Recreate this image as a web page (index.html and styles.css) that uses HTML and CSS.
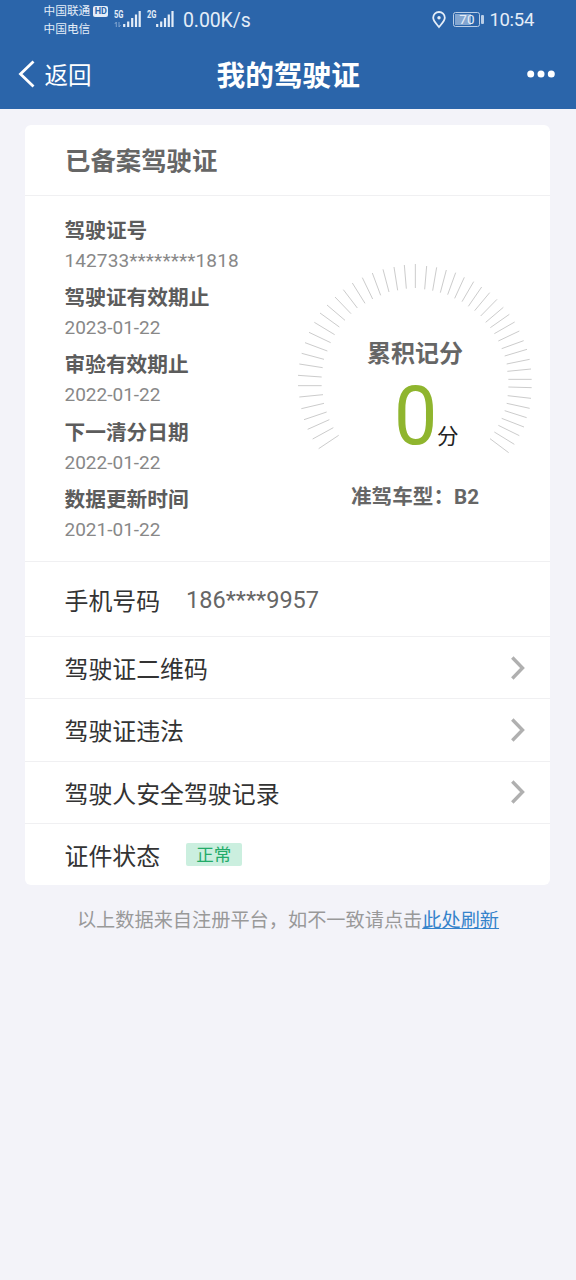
FILE: index.html
```html
<!DOCTYPE html>
<html lang="zh-CN">
<head>
<meta charset="utf-8">
<title>我的驾驶证</title>
<link rel="stylesheet" href="styles.css">
</head>
<body>
<header class="header">
  <div class="status">
    <div class="carriers">
      <div class="carrier">中国联通<span class="hd">HD</span></div>
      <div class="carrier">中国电信</div>
    </div>
    <svg class="signals" width="62" height="24" viewBox="0 0 62 24">
      <g class="net"><text x="0" y="11" textLength="9.5" lengthAdjust="spacingAndGlyphs">5G</text><text x="33" y="11" textLength="9.5" lengthAdjust="spacingAndGlyphs">2G</text></g>
      <path class="arrows" d="M2.3 20v-5l-1.5 2M5 15v5l1.5-2"/>
      <path class="bars" d="M10.2 20v-3M14.2 20v-5.500M18.200 20v-9M22 20V7.500M25.700 20V4M43.200 20v-3M47.200 20v-5.500M51 20v-9M54.800 20V7.500M58.500 20V4"/>
    </svg>
    <span class="speed">0.00K/s</span>
    <div class="status-right">
      <svg width="14" height="18" viewBox="0 0 14 18"><path class="pin" d="M7 16C4.200 12.600 1.200 10 1.200 6.800a5.800 5.800 0 0 1 11.600 0C12.800 10 9.800 12.600 7 16z"/><circle cx="7" cy="6.800" r="1.700" fill="#e4edf8"/></svg>
      <span class="battery"><span class="level">70</span></span>
      <span class="clock">10:54</span>
    </div>
  </div>
  <nav class="nav">
    <div class="back"><svg width="18" height="30" viewBox="0 0 18 30"><path d="M15.500 2.500L2.500 15l13 12.500"/></svg><span>返回</span></div>
    <h1 class="title">我的驾驶证</h1>
    <svg class="more" width="28" height="8" viewBox="0 0 28 8"><circle cx="3.700" cy="4" r="3.500"/><circle cx="14" cy="4" r="3.500"/><circle cx="24.300" cy="4" r="3.500"/></svg>
  </nav>
</header>
<main>
  <section class="card">
    <h2 class="card-title">已备案驾驶证</h2>
    <div class="details">
      <dl class="facts">
        <dt>驾驶证号</dt><dd class="license-number">142733********1818</dd>
        <dt>驾驶证有效期止</dt><dd>2023-01-22</dd>
        <dt>审验有效期止</dt><dd>2022-01-22</dd>
        <dt>下一清分日期</dt><dd>2022-01-22</dd>
        <dt>数据更新时间</dt><dd>2021-01-22</dd>
      </dl>
      <div class="gauge">
        <svg class="ticks" width="240" height="200" viewBox="45 30 720 600"><path d="M116 596L176 556M98 567L160 533M83 538L148 509M72 509L140 486M64 476L132 460M58 441L129 434M54 407L125 407M54 376L125 381M58 342L128 353M65 310L132 328M75 278L142 303M87 247L152 278M103 217L164 254M120 189L178 231M141 165L195 211M165 141L213 191M190 119L232 174M217 99L255 160M247 83L278 147M277 69L302 136M309 58L327 126M342 51L353 121M373 45L379 116M406 42L406 114M440 48L434 118M470 52L458 122M499 60L481 128M527 68L503 134M553 82L524 145M581 95L546 155M605 111L565 169M629 128L584 182M651 148L602 198M670 172L617 217M688 193L631 233M704 216L643 251M718 243L655 273M731 272L665 296M741 298L674 318M749 328L680 342M753 357L682 364M755 388L685 388M755 413L685 411M753 445L683 437M749 475L680 460M740 503L674 482M732 531L665 505M718 557L655 526M703 583L643 546M686 608L630 566"/></svg>
        <div class="score">
          <div class="score-label">累积记分</div>
          <div class="score-value"><span class="num">0</span><span class="unit">分</span></div>
        </div>
        <div class="vehicle">准驾车型：B2</div>
      </div>
    </div>
    <div class="row phone"><span>手机号码</span><span class="phone-number">186****9957</span></div>
    <div class="row"><span>驾驶证二维码</span><svg class="chevron" width="14" height="24" viewBox="0 0 14 24"><path d="M1.300 1.500L11.500 12L1.300 22.500"/></svg></div>
    <div class="row"><span>驾驶证违法</span><svg class="chevron" width="14" height="24" viewBox="0 0 14 24"><path d="M1.300 1.500L11.500 12L1.300 22.500"/></svg></div>
    <div class="row"><span>驾驶人安全驾驶记录</span><svg class="chevron" width="14" height="24" viewBox="0 0 14 24"><path d="M1.300 1.500L11.500 12L1.300 22.500"/></svg></div>
    <div class="row"><span>证件状态</span><span class="badge">正常</span></div>
  </section>
  <p class="note">以上数据来自注册平台，如不一致请点击<a href="#">此处刷新</a></p>
</main>
</body>
</html>
```
FILE: styles.css
```css
* { box-sizing: border-box; }
body {
  margin: 0;
  min-height: 1280px;
  background: #f3f3f9;
  color: #333;
  font-family: Roboto, "Noto Sans CJK SC", sans-serif;
}
h1, h2, p, dl, dd { margin: 0; }
.header { height: 109px; background: #2b65aa; color: #fff; }
.status { display: flex; height: 40px; padding-left: 43.500px; color: #e4edf8; }
.carriers { width: 70.500px; padding-top: 3px; }
.carrier { display: flex; align-items: center; height: 17.500px; font-size: 11.700px; line-height: 17.500px; white-space: nowrap; }
.hd {
  width: 15px; height: 11px; margin: -1px 0 0 3px; border-radius: 2px;
  background: #e4edf8; color: #2b65aa; font-size: 9px; font-weight: 700;
  line-height: 11.500px; text-align: center;
}
.signals { margin-top: 7px; }
.net { fill: #e4edf8; font-size: 10px; font-weight: 700; }
.arrows { fill: none; stroke: #7fa3cf; stroke-width: 1; }
.bars { fill: none; stroke: #e4edf8; stroke-width: 2.200; }
.speed { margin-left: 7px; padding-top: 1px; font-size: 19.500px; line-height: 40px; letter-spacing: -0.100px; }
.status-right { display: flex; align-items: center; margin-left: auto; padding-right: 42px; }
.pin { fill: none; stroke: #e4edf8; stroke-width: 1.800; }
.battery {
  position: relative; width: 27px; height: 15px; margin: -1px 9px 0 7.500px; padding: 1px;
  border: 1px solid #b9cde6; border-radius: 2.500px;
}
.battery::after {
  content: ""; position: absolute; left: 27px; top: 2px; width: 2.500px; height: 9px;
  border-radius: 1px; background: #b9cde6;
}
.level {
  display: block; height: 11px;
  background: linear-gradient(90deg, #82a5d0 70%, transparent 70%);
  font-size: 13.500px; line-height: 11.500px; text-align: center;
}
.clock { font-size: 18.500px; line-height: 40px; letter-spacing: -0.300px; }
.nav { display: grid; grid-template-columns: 1fr auto 1fr; align-items: center; height: 69px; padding: 0 21px 0 18px; }
.back { display: flex; align-items: center; gap: 8.500px; font-size: 23.500px; line-height: 34px; }
.back path { fill: none; stroke: #fff; stroke-width: 2.800; }
.back svg { margin-top: -2px; }
.back span { padding-top: 2px; }
.title { padding: 2px 0 0 2.500px; margin-right: -1px; font-size: 28.700px; line-height: 40px; }
.more { justify-self: end; margin-top: -2px; fill: #fff; }
.card { margin: 16px 26px 0 25px; overflow: hidden; border-radius: 6px; background: #fff; }
.card-title { height: 71px; padding: 1px 0 0 40px; border-bottom: 1px solid #f0f0f2; color: #666; font-size: 25.400px; line-height: 71px; }
.details { display: flex; height: 365px; padding: 20px 17px 0 39.500px; }
.facts { width: 232px; }
.facts dt { height: 30px; color: #5c5c5c; font-size: 20.700px; font-weight: 700; line-height: 30px; }
.facts dd { height: 30px; margin-bottom: 7.200px; color: #888; font-size: 19px; line-height: 30px; }
.facts .license-number { letter-spacing: 0.110px; }
.gauge { display: grid; grid-template-rows: 225px auto; width: 240px; padding-top: 44px; margin-left: -1.500px; }
.ticks { grid-area: 1 / 1; margin-left: 2px; }
.ticks path { fill: none; stroke: #ccc; stroke-width: 3; }
.score { grid-area: 1 / 1; padding: 76px 0 0 2px; text-align: center; }
.score-label { color: #666; font-size: 24px; font-weight: 700; line-height: 36px; }
.score-value { display: flex; align-items: baseline; height: 80px; padding-left: 99px; }
.num { width: 41px; color: #8fb52e; font-size: 82px; line-height: 88px; transform: scaleX(0.940); transform-origin: left; }
.unit { margin-left: 2px; color: #222; font-size: 21.500px; line-height: 30px; }
.vehicle { padding-left: 2px; color: #666; font-size: 20.600px; font-weight: 700; line-height: 24px; text-align: center; }
.row { display: flex; align-items: center; height: 62.300px; padding: 0 25.500px 0 39.500px; border-top: 1px solid #f0f0f2; font-size: 23.900px; }
.phone { height: 75px; }
.phone-number { padding-top: 1px; margin-left: 26px; color: #666; font-size: 23.500px; }
.chevron { margin-left: auto; }
.chevron path { fill: none; stroke: #b0b0b0; stroke-width: 3.400; }
.badge { width: 56.500px; height: 23.500px; margin-left: 25.500px; border-radius: 2px; background: #cbefdf; color: #22ab68; font-size: 17.500px; line-height: 25px; text-align: center; }
.note { margin-top: 20.500px; color: #999; font-size: 19.200px; line-height: 30px; text-align: center; white-space: nowrap; }
.note a { color: #3583cb; text-decoration-thickness: 1px; }
```
